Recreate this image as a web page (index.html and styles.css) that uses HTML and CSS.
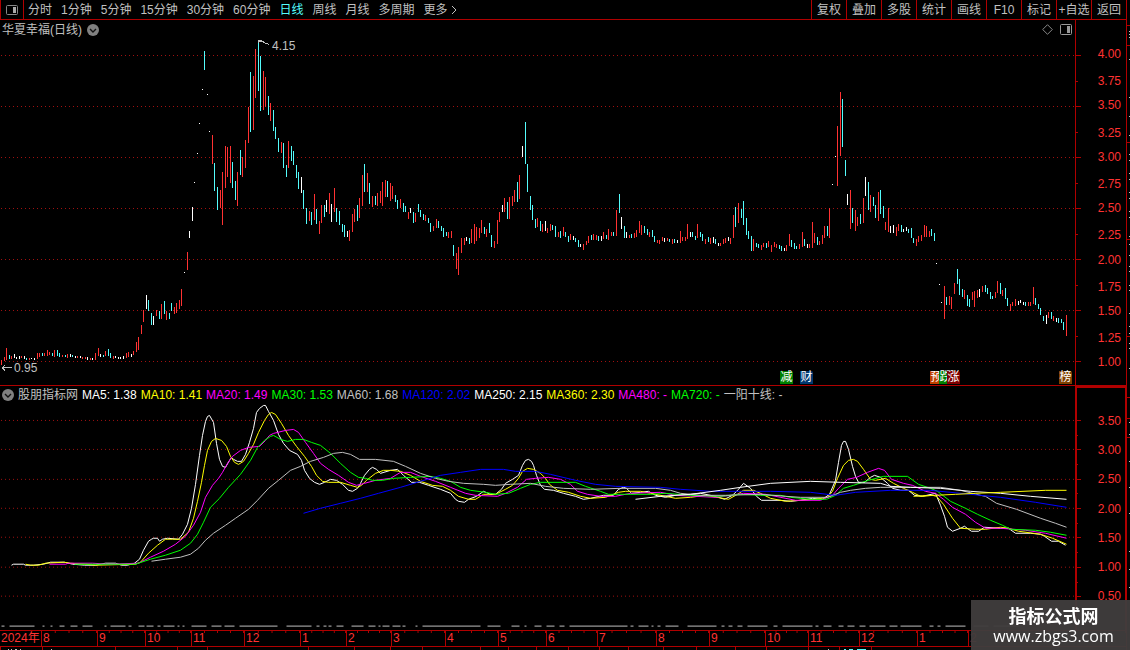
FILE: index.html
```html
<!DOCTYPE html>
<html lang="zh-CN">
   <head>
      <meta charset="utf-8">
      <title>华夏幸福(日线)</title>
      <link rel="stylesheet" href="styles.css">
   </head>
   <body>
      <div class="app">
         <div class="main">
            <header class="toolbar">
               <button class="panel-toggle" aria-label="侧栏">
                  <svg width="12" height="10" viewBox="0 0 12 10"><rect x=".5" y=".5" width="11" height="9" rx="1" fill="none" stroke="#888"/><rect x="7" y="2" width="3" height="6" fill="#aaa"/></svg>
               </button>
               <nav class="periods">
                  <button>分时</button>
                  <button>1分钟</button>
                  <button>5分钟</button>
                  <button>15分钟</button>
                  <button>30分钟</button>
                  <button>60分钟</button>
                  <button class="active">日线</button>
                  <button>周线</button>
                  <button>月线</button>
                  <button>多周期</button>
                  <button class="more">更多<svg width="6" height="10" viewBox="0 0 6 10"><path d="M1 1L5 5L1 9" fill="none" stroke="#c0c0c0"/></svg></button>
               </nav>
               <div class="tools">
                  <button>复权</button>
                  <button>叠加</button>
                  <button>多股</button>
                  <button>统计</button>
                  <button>画线</button>
                  <button>F10</button>
                  <button>标记</button>
                  <button>+自选</button>
                  <button>返回</button>
               </div>
            </header>

            <section class="pane price-pane">
               <div class="chart">
                  <div class="chart-title">
                     <h1>华夏幸福(日线)</h1>
                     <button aria-label="展开"><svg width="12" height="12" viewBox="0 0 12 12"><circle cx="6" cy="6" r="6" fill="#808080"/><path d="M3 5L6 8L9 5" fill="none" stroke="#111" stroke-width="1.4"/></svg></button>
                     <div class="chart-icons">
                        <svg width="11" height="11" viewBox="0 0 11 11"><path d="M5.500 .7L10.300 5.500L5.500 10.300L.7 5.500Z" fill="none" stroke="#888"/></svg>
                        <svg width="12" height="11" viewBox="0 0 12 11"><rect x=".5" y=".5" width="11" height="10" rx="1" fill="none" stroke="#999"/><rect x="7" y="2" width="3" height="7" fill="#999"/></svg>
                     </div>
                  </div>
                  <svg class="plot" viewBox="0 20 1075 365" preserveAspectRatio="none">
                     <path class="grid" d="M1 55.500H1075M1 106.500H1075M1 157.500H1075M1 208.500H1075M1 259.500H1075M1 310.500H1075M1 361.500H1075"/>
                     <g transform="translate(.5 0)">
                        <path class="up" d="M1 360V365M4 357V361M6 348V360M11 356V359M21 356V358M29 358V360M37 353V359M39 353V357M44 353V356M47 350V356M49 352V355M54 350V357M62 355V357M67 354V358M77 356V358M82 357V359M85 357V359M90 358V360M95 353V360M98 348V356M105 351V356M113 356V359M126 353V358M128 352V357M133 351V355M136 342V352M138 337V350M141 325V334M143 310V322M156 310V316M161 304V319M166 311V320M174 307V314M176 303V313M179 300V309M181 289V306M187 252V270M212 135V164M220 190V208M222 172V225M225 146V188M227 147V177M230 146V183M237 172V206M242 157V177M245 140V168M248 107V143M253 76V130M255 49V98M263 71V110M265 77V107M270 103V121M281 142V153M288 141V168
                        M309 211V221M314 194V220M319 221V234M321 205V223M329 193V214M334 188V212M349 230V241M352 214V232M354 209V222M359 198V218M362 175V206M367 173V192M372 196V207M377 193V206M380 191V203M382 182V206M385 180V197M390 183V201M392 186V199M400 199V208M408 212V219M415 213V222M425 215V221M433 226V231M436 219V228M448 232V238M451 231V238M456 253V269M458 247V275M461 238V253M464 238V245M471 229V243M474 224V244M476 227V241M479 228V238M481 220V233M486 229V237M494 241V248M497 220V244M499 212V222M504 198V212M509 197V219M512 196V206M514 190V202M519 175V199M537 218V227M542 224V232M547 228V233M550 224V231M558 232V237M563 227V236M570 234V240M583 244V250M586 241V245M588 236V243
                        M593 234V240M596 235V240M603 232V239M608 229V240M611 232V236M616 210V236M629 235V238M634 233V238M636 230V237M639 221V233M641 225V235M649 232V237M657 240V243M659 240V244M662 237V241M667 238V241M672 239V244M680 231V243M682 237V241M685 237V241M687 224V239M697 224V238M705 239V244M710 238V244M720 243V246M723 239V244M725 238V243M730 238V244M733 215V238M738 203V223M753 239V251M761 245V250M763 243V247M768 241V247M771 245V252M774 242V247M776 244V248M786 245V251M789 234V246M799 244V249M802 232V247M809 244V248M812 222V248M814 233V243M819 241V245M822 235V244M824 226V238M829 208V238M837 126V186M840 92V156M850 190V229M855 210V231M857 217V226
                        M863 198V223M870 195V212M878 192V221M885 222V230M888 208V232M896 227V236M898 224V231M916 239V246M918 236V242M921 235V241M924 225V237M926 226V237M929 231V237M944 286V319M949 296V305M951 297V309M954 283V294M964 290V299M972 292V300M974 291V307M977 290V298M982 286V292M995 292V298M997 281V293M1002 290V296M1010 304V311M1012 302V306M1015 299V306M1028 302V306M1030 302V306M1033 287V304M1048 312V318M1053 316V321M1066 315V336"/>
                        <path class="down" d="M9 355V359M26 358V360M42 353V356M52 353V356M57 350V356M59 353V357M65 355V357M72 355V357M103 355V357M108 349V356M110 353V358M148 300V311M151 313V325M159 311V319M164 301V314M169 313V319M171 303V311M204 51V70M214 163V191M217 187V210M232 162V188M235 181V200M240 150V175M250 72V132M258 40V91M260 56V111M268 96V115M273 110V131M275 127V139M278 138V152M283 143V168M286 165V177M291 146V161M293 151V165M296 165V178M298 172V189
                        M303 190V209M306 208V224M311 212V225M316 209V224M324 205V217M336 208V222M339 211V225M342 224V232M344 225V237M357 205V221M364 164V192M369 183V204M375 196V205M387 181V197M395 195V202M397 200V209M403 203V212M405 206V212M413 212V223M418 204V212M420 210V217M423 214V220M428 218V223M430 223V232M438 221V228M441 226V231M443 228V237M446 232V236M453 245V256M469 238V244M484 227V234M489 223V233M491 235V247M507 202V219M517 182V202M525 122V164M527 164V192M530 196V210M532 205V220M535 219V228M540 221V231M552 225V230M555 226V237M560 231V238M565 232V237M568 236V242M575 238V242M578 240V247
                        M591 235V240M598 236V241M606 235V239M613 232V236M619 194V213M624 226V238M631 234V238M644 226V233M647 229V235M652 230V237M654 236V242M669 239V242M674 239V243M692 232V237M695 236V240M700 232V237M702 234V241M708 237V242M715 239V244M735 207V227M741 209V218M743 201V225M746 218V235M748 231V239M751 236V251M756 243V247M758 244V248M766 243V248M779 245V249M781 246V251M791 240V247M794 243V249M796 246V249M804 239V246M817 237V245M827 226V236M842 99V147M845 160V176M852 208V223
                        M860 214V224M868 182V210M873 197V206M875 205V218M880 190V214M883 206V218M901 225V232M908 229V233M911 228V238M913 238V243M931 229V236M934 233V241M946 297V305M957 269V284M959 279V295M962 289V297M967 295V306M969 299V307M985 285V292M987 288V294M990 292V299M992 296V299M1000 283V294M1005 288V299M1007 298V306M1025 302V306M1035 298V305M1038 304V309M1040 308V315M1043 316V321M1051 312V319M1058 318V323M1061 319V323M1063 322V330"/>
                        <path class="flat" d="M14 354V358M16 357V359M19 356V359M24 356V359M31 358V359M34 358V360M70 354V357M75 356V358M80 356V358M87 357V360M92 358V360M100 354V357M115 356V358M118 357V359M120 357V359M123 356V359M131 354V357M146 295V309M153 316V325M184 272V273M189 231V238M192 207V221M194 182V183M197 153V154M199 123V124M202 89V90M207 94V95M209 131V132M301 177V193M326 200V212M331 204V222M347 231V237M410 208V213M466 237V241M502 205V212M522 146V157M545 221V231M573 236V240M580 244V247M601 236V241M621 217V229M626 232V238M664 238V242M677 240V243M690 232V237M713 237V243M718 243V246M728 237V241M784 248V251M807 244V248M832 184V185M835 156V157M847 194V205M865 177V196M890 226V233M893 225V233M903 229V232M906 227V231M936 263V264M939 284V285M941 302V303M979 289V297M1018 301V305M1020 300V303M1023 302V305M1046 315V324M1056 318V322"/>
                     </g>
                     <path class="arrow" d="M258.500 43V40.500H262M259 41.500H263L265 43L269 44.500M2 367.500H12M2 367.500L5 364.500M2 367.500L5 370"/>
                  </svg>
                  <span class="mark high">4.15</span>
                  <span class="mark low">0.95</span>
                  <span class="tag green" style="left:72.560%">减</span>
                  <span class="tag blue" style="left:74.420%">财</span>
                  <span class="tag orange" style="left:86.520%">预</span>
                  <span class="tag green" style="left:87.350%">跌</span>
                  <span class="tag red" style="left:88.090%">涨</span>
                  <span class="tag brown" style="left:98.520%">榜</span>
               </div>
               <div class="axis">
                  <svg class="ticks" viewBox="0 20 50 365" preserveAspectRatio="none"><path d="M0 55.500H5M0 106.500H5M0 157.500H5M0 208.500H5M0 259.500H5M0 310.500H5M0 361.500H5M0 81.500H2M0 132.500H2M0 183.500H2M0 234.500H2M0 285.500H2M0 336.500H2"/></svg>
                  <span>4.00</span>
                  <span class="mid">3.75</span>
                  <span>3.50</span>
                  <span class="mid">3.25</span>
                  <span>3.00</span>
                  <span class="mid">2.75</span>
                  <span>2.50</span>
                  <span class="mid">2.25</span>
                  <span>2.00</span>
                  <span class="mid">1.75</span>
                  <span>1.50</span>
                  <span class="mid">1.25</span>
                  <span>1.00</span>
               </div>
            </section>

            <section class="pane ma-pane">
               <div class="chart">
                  <div class="legend">
                     <button aria-label="展开"><svg width="12" height="12" viewBox="0 0 12 12"><circle cx="6" cy="6" r="6" fill="#808080"/><path d="M3 5L6 8L9 5" fill="none" stroke="#111" stroke-width="1.4"/></svg></button>
                     <h2>股朋指标网</h2>
                     <span class="c-white">MA5: 1.38</span>
                     <span class="c-yellow">MA10: 1.41</span>
                     <span class="c-magenta">MA20: 1.49</span>
                     <span class="c-green">MA30: 1.53</span>
                     <span class="c-gray">MA60: 1.68</span>
                     <span class="c-blue">MA120: 2.02</span>
                     <span class="c-white">MA250: 2.15</span>
                     <span class="c-yellow">MA360: 2.30</span>
                     <span class="c-magenta">MA480: -</span>
                     <span class="c-green">MA720: -</span>
                     <span class="c-gray">一阳十线: -</span>
                  </div>
                  <svg class="plot" viewBox="0 386 1075 244" preserveAspectRatio="none">
                     <path class="grid" d="M1 420.500H1075M1 449.500H1075M1 479.500H1075M1 508.500H1075M1 537.500H1075M1 567.500H1075M1 596.500H1075"/>
                     <g class="lines" transform="translate(.5 .5)">
                        <polyline stroke="#fff" points="11,565 13,564 23,564 25,565 33,565 43,564 50,562 64,562 72,564 84,565 95,565 105,563 115,563 121,565 127,565 134,563 139,559 143,550 148,541 151,539 153,538 157,538 159,541 162,539 167,538 178,539 182,534 187,524 191,508 195,484 199,455 202,435 205,421 207,416 209,415 213,422 216,443 219,459 222,466 225,467 229,460 231,457 233,459 237,461 241,461 245,454 249,442 253,428 256,412 259,408 263,405 265,405 268,411 273,420 278,434 283,443 289,450 297,454 301,460 304,470 309,478 314,482 319,484 324,482 330,479 336,480 342,484 348,490 352,491 357,488 360,483 364,475 369,469 372,467 376,469 380,473 390,470 397,469 403,475 411,482 419,482 428,485 440,489 450,493 455,499 458,501 464,502 468,499 476,496 483,491 490,494 495,494 501,489 505,483 512,479 518,475 522,465 525,460 528,459 531,461 533,465 536,475 540,485 544,489 553,490 563,493 575,496 583,499 590,498 603,495 613,495 618,489 623,487 626,488 631,493 640,492 648,491 655,495 665,497 675,495 690,494 700,493 710,495 718,497 724,499 732,495 738,489 743,483 750,488 756,496 761,500 780,500 790,501 800,500 812,498 822,499 829,494 835,480 838,462 841,445 843,441 845,441 848,449 852,466 855,476 858,482 864,482 870,477 874,475 880,477 887,483 892,488 900,490 908,490 914,495 922,496 935,493 940,505 944,516 947,527 952,531 960,528 964,526 968,529 971,531 978,531 984,527 1000,528 1008,528 1015,533 1030,533 1040,534 1044,536 1051,541 1058,541 1065,545"/>
                        <polyline stroke="#ff0" points="25,564 30,565 38,565 45,563 63,562 70,563 85,564 95,565 135,564 140,562 148,553 157,545 165,539 172,539 180,539 188,532 193,518 197,501 201,482 204,465 207,450 211,441 215,438 221,440 226,446 230,456 234,462 238,464 243,461 248,453 253,444 258,432 264,420 268,414 271,412 275,414 281,423 288,435 296,446 304,456 311,466 316,475 322,481 328,482 340,482 350,485 357,487 361,485 366,480 375,473 383,470 390,470 400,471 410,475 420,481 432,485 442,486 450,490 458,496 468,499 475,499 483,494 495,494 505,489 512,485 518,478 522,471 527,468 533,469 540,473 545,478 549,484 557,490 568,492 580,496 590,498 605,497 618,492 625,491 640,491 650,493 665,496 675,498 690,497 705,495 728,499 737,494 743,490 753,490 760,493 770,498 785,501 800,500 815,499 827,497 832,491 837,478 843,465 848,460 853,459 857,461 863,469 870,479 875,480 885,478 893,483 903,488 912,492 920,496 932,495 936,496 943,504 952,518 960,528 975,529 985,529 1000,527 1008,528 1018,531 1040,534 1052,538 1066,544"/>
                        <polyline stroke="#f0f" points="49,564 65,564 68,563 92,563 108,564 138,563 150,557 163,551 175,544 185,536 193,525 200,512 205,497 212,485 218,478 222,472 227,463 232,456 240,450 248,447 259,446 265,440 269,435 273,433 285,430 293,429 298,432 305,442 313,453 320,463 328,469 338,475 348,482 356,485 364,483 375,480 390,478 400,472 410,472 420,476 435,481 450,487 465,493 475,495 497,496 505,493 517,487 526,479 535,478 548,477 560,479 570,484 577,491 587,494 600,496 615,496 630,493 660,492 675,495 715,497 730,495 743,493 765,494 795,500 820,500 832,495 838,488 847,479 856,477 867,472 878,468 884,470 891,479 903,483 912,485 925,491 935,493 943,499 952,507 965,514 975,522 985,528 1000,528 1025,530 1045,533 1066,538"/>
                        <polyline stroke="#0f0" points="74,564 135,564 150,559 165,555 180,550 190,543 197,534 203,522 210,507 219,498 228,487 240,474 250,460 257,447 264,440 270,436 273,435 280,439 287,441 295,439 303,439 311,442 320,445 330,453 340,463 350,472 358,477 365,478 372,480 382,480 393,478 410,477 430,476 440,478 450,481 460,487 470,490 485,492 495,494 508,493 520,488 530,484 540,482 575,482 585,486 600,491 608,494 650,494 665,493 690,495 720,496 740,494 760,495 780,495 790,497 810,499 826,499 835,495 843,488 853,485 868,480 883,476 907,476 918,484 930,488 937,491 950,501 965,508 977,514 990,520 1002,525 1010,529 1035,530 1050,532 1066,535"/>
                        <polyline stroke="#c0c0c0" points="151,561 165,559 180,557 190,554 198,548 205,540 213,533 225,525 235,518 248,509 257,500 268,488 278,480 290,470 300,466 310,461 323,457 333,453 342,452 350,454 359,459 375,459 393,461 405,466 420,473 435,478 448,481 463,483 483,484 495,485 510,484 530,483 545,486 563,488 590,489 620,488 655,488 670,490 680,493 700,495 725,495 760,494 785,496 800,497 827,497 840,492 850,490 865,488 880,487 910,487 940,487 960,490 980,495 985,496 996,503 1016,509 1040,518 1055,523 1066,527"/>
                        <polyline stroke="#00f" points="303,513 320,508 340,503 360,498 378,493 400,487 420,481 440,475 460,472 480,469 503,469 515,471 535,471 550,474 575,480 595,484 615,486 660,487 680,489 710,491 770,491 810,492 835,495 855,492 890,490 930,490 970,494 1000,497 1035,502 1066,507"/>
                        <polyline stroke="#fff" points="635,499 660,496 690,494 720,490 740,487 770,483 810,481 840,482 880,483 890,486 910,487 940,488 970,491 1000,493 1030,496 1066,499"/>
                        <polyline stroke="#ff0" points="913,496 935,495 955,494 975,493 1000,492 1045,490 1066,490"/>
                        <path stroke="#c0c0c0" d="M1 626H4M9 626H34M42 626H44M50 626H52M59 626H64M70 626H77M82 626H92M104 626H106M110 626H125M128 626H131M138 626H144M146 626H153M157 626H160M163 626H174M177 626H179M182 626H184M191 626H206M211 626H221M224 626H234M239 626H277M286 626H311M316 626H319M323 626H326M328 626H331M336 626H343M351 626H363M368 626H375M378 626H380M382 626H389M392 626H400M402 626H405M415 626H417M422 626H480M487 626H500M511 626H519M524 626H526M534 626H541M546 626H554M559 626H564M569 626H627M630 626H633M638 626H648M651 626H653M657 626H660M665 626H678M687 626H716M721 626H724M728 626H732M737 626H742M747 626H767M773 626H777M782 626H812M815 626H818M823 626H831M838 626H843M847 626H854M859 626H865M869 626H885M889 626H897M900 626H921M929 626H933M937 626H940M945 626H965M973 626H988M993 626H1018"/>
                     </g>
                  </svg>
               </div>
               <div class="axis">
                  <svg class="ticks" viewBox="0 388 49 242" preserveAspectRatio="none"><path d="M0 420.500H4M0 449.500H4M0 479.500H4M0 508.500H4M0 537.500H4M0 567.500H4M0 596.500H4M0 435.500H1M0 464.500H1M0 493.500H1M0 523.500H1M0 552.500H1M0 582.500H1"/></svg>
                  <span>3.50</span>
                  <span>3.00</span>
                  <span>2.50</span>
                  <span>2.00</span>
                  <span>1.50</span>
                  <span>1.00</span>
                  <span>0.50</span>
               </div>
            </section>

            <div class="months">
               <span>2024年</span><span>8</span><span>9</span><span>10</span><span>11</span><span>12</span><span>1</span><span>2</span><span>3</span><span>4</span><span>5</span><span>6</span><span>7</span><span>8</span><span>9</span><span>10</span><span>11</span><span>12</span><span>1</span><span>2</span>
            </div>
            <svg class="next-row" viewBox="0 0 1126 3" preserveAspectRatio="none">
               <path stroke="#b00000" d="M.5 0V3M42.500 0V3M115.500 0V3M177.500 0V3M207.500 0V3M308.500 0V3M354.500 0V3M390.500 0V3M422.500 0V3M480.500 0V3M508.500 0V3M536.500 0V3M568.500 0V3M599.500 0V3M628.500 0V3M663.500 0V3M696.500 0V3M735.500 0V3M766.500 0V3M808.500 0V3M839.500 0V3M871.500 0V3"/>
               <path stroke="#c0c0c0" d="M8 2.500H9M11 2.500H12M15 2.500H17M20 2.500H21M51 2.500H52M828 2.500H829"/>
               <path stroke="#54fcfc" d="M844 2.500H846M849 2.500H853M857 2.500H866"/>
            </svg>
         </div>
         <svg class="edge" viewBox="0 0 3 650" preserveAspectRatio="none">
            <path stroke="#b00000" d="M0 25.500H3M0 45.500H3M0 142.500H3M0 239.500H3M0 336.500H3M0 397.500H3M0 418.500H3M0 437.500H3"/>
            <path stroke="#c0c0c0" d="M2 31.500H3M2 34.500H3M2 37.500H3M2 59.500H3M2 97.500H3M2 116.500H3M2 135.500H3M2 154.500H3M2 160.500H3M2 173.500H3M2 179.500H3M2 192.500H3M2 198.500H3M2 211.500H3M2 217.500H3M2 236.500H3M2 244.500H3M2 255.500H3M2 266.500H3M2 271.500H3M2 285.500H3M2 290.500H3M2 313.500H3M2 326.500H3M2 333.500H3M2 343.500H3M2 348.500H3M2 368.500H3M2 422.500H3M2 434.500H3M2 461.500H3M2 487.500H3M2 513.500H3M2 551.500H3M2 569.500H3M2 587.500H3"/>
         </svg>
      </div>
      <aside class="watermark">
         <strong>指标公式网</strong>
         <a href="#">www.zbgs3.com</a>
      </aside>
   </body>
</html>
```
FILE: styles.css
```css
* {
   box-sizing: border-box;
}
body {
   margin: 0;
   background: #000;
   color: #c0c0c0;
   font: 12px/14px "Liberation Sans", "Noto Sans CJK SC", sans-serif;
}
button {
   margin: 0;
   padding: 0;
   border: 0;
   background: none;
   color: inherit;
   font: inherit;
   white-space: nowrap;
   cursor: pointer;
}
svg {
   display: block;
   flex: none;
}
h1, h2 {
   margin: 0;
   font-size: 12px;
   font-weight: normal;
}
.app {
   display: flex;
   height: 100vh;
   overflow: hidden;
}
.main {
   flex: 1;
   min-width: 0;
   display: flex;
   flex-direction: column;
   border-right: 1px solid #b00000;
}
.edge {
   width: 3px;
   height: 100%;
}

/* toolbar */
.toolbar {
   display: flex;
   height: 20px;
   flex: none;
   border-bottom: 1px solid #b00000;
}
.panel-toggle {
   display: flex;
   align-items: center;
   justify-content: center;
   width: 24px;
   border: solid #b00000;
   border-width: 0 1px;
}
.periods {
   display: flex;
   gap: 9px;
   padding-left: 4px;
}
.periods .active {
   color: #54fcfc;
}
.periods .more {
   display: flex;
   align-items: center;
   gap: 3px;
}
.tools {
   display: flex;
   margin-left: auto;
}
.tools button {
   width: 35px;
   border-left: 1px solid #b00000;
}

/* panes */
.pane {
   display: flex;
   min-height: 0;
}
.price-pane {
   flex: 366 1 0;
   border-bottom: 1px solid #b00000;
}
.ma-pane {
   flex: 244 1 0;
}
.chart {
   position: relative;
   flex: 1;
   min-width: 0;
}
.plot {
   width: 100%;
   height: 100%;
   shape-rendering: crispEdges;
}
.plot path, .plot polyline {
   fill: none;
}
.plot .grid {
   stroke: #a01010;
   stroke-dasharray: 1 3;
}
.up {
   stroke: #ff3232;
}
.down {
   stroke: #54fcfc;
}
.flat {
   stroke: #fff;
}
.arrow {
   stroke: #c0c0c0;
}
.chart-title, .legend {
   position: absolute;
   top: 0;
   left: 0;
   right: 0;
   display: flex;
   align-items: center;
   white-space: nowrap;
}
.chart-title {
   gap: 5px;
   height: 19px;
   padding: 0 3px 0 2px;
}
.chart-icons {
   display: flex;
   align-items: center;
   gap: 7px;
   margin-left: auto;
}
.legend {
   gap: 4px;
   height: 17px;
   padding-left: 2px;
}
.mark {
   position: absolute;
}
.high {
   top: 19px;
   left: 25.300%;
}
.low {
   bottom: 10px;
   left: 14px;
}
.tag {
   position: absolute;
   bottom: 1px;
   width: 13px;
   height: 13px;
   border-top-right-radius: 2px;
   color: #fff;
   line-height: 13px;
   text-align: center;
}
.green {
   background: #008000;
}
.blue {
   background: #003870;
}
.orange {
   background: #c04000;
}
.red {
   background: #800000;
}
.brown {
   background: #804000;
}
.c-white {
   color: #fff;
}
.c-yellow {
   color: #ff0;
}
.c-magenta {
   color: #f0f;
}
.c-green {
   color: #0f0;
}
.c-blue {
   color: #00f;
}

/* value axis */
.axis {
   position: relative;
   display: flex;
   flex-direction: column;
   width: 51px;
   padding: 22px 5px 11px 0;
   border-left: 1px solid #b00000;
   color: #ff3232;
   text-align: right;
}
.axis span {
   flex: 1 1 0;
   min-height: 0;
   display: flex;
   align-items: center;
   justify-content: flex-end;
}
.axis .mid {
   padding-top: 3px;
}
.ma-pane .axis {
   padding: 18px 4px 19px 0;
   border: solid #b00000;
   border-width: 2px 1px 0 2px;
}
.ticks {
   position: absolute;
   top: 0;
   left: 0;
   width: 100%;
   height: 100%;
   shape-rendering: crispEdges;
}
.ticks path {
   stroke: #b00000;
}

/* month axis */
.months {
   display: grid;
   grid-template-columns: 41fr 56fr 48fr 46fr 53fr 56fr 46fr 45fr 54fr 53fr 48fr 51fr 59fr 53fr 56fr 43fr 51fr 58fr 51fr 158fr;
   flex: none;
   height: 17px;
   border: solid #b00000;
   border-width: 1px 0;
   color: #ff3232;
   line-height: 15px;
}
.months span {
   min-width: 0;
   padding-left: 1px;
   white-space: nowrap;
}
.months span + span {
   border-left: 1px solid #b00000;
   background: linear-gradient(to right, transparent calc(100% - 1px), #b00000 0) repeat-x;
   background-size: 25% 2px;
}
.next-row {
   width: 100%;
   height: 3px;
}

.watermark {
   position: fixed;
   right: 0;
   bottom: 0;
   display: flex;
   flex-direction: column;
   align-items: center;
   width: 159px;
   height: 50px;
   padding: 4px 0 0 6px;
   background: rgba(64, 60, 60, .96);
   color: #fff;
}
.watermark strong {
   font: bold 18px/22px "Noto Sans CJK SC", sans-serif;
}
.watermark a {
   color: inherit;
   font: 16px/20px "Open Sans", sans-serif;
   text-decoration: none;
}
```
